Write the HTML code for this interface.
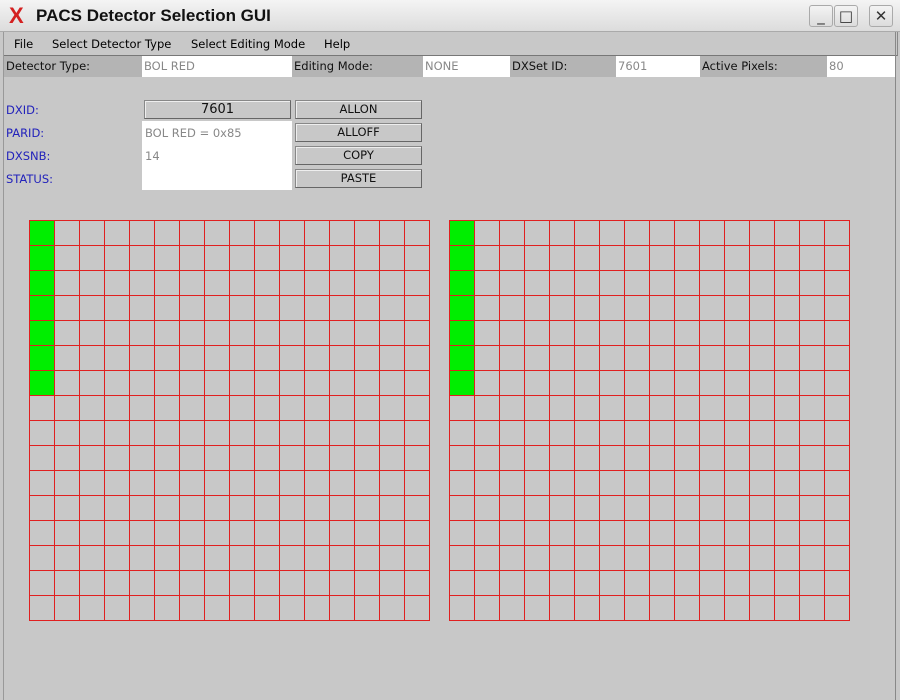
<!DOCTYPE html>
<html><head><style>
body{margin:0;width:900px;height:700px;background:#c8c8c8;font-family:"DejaVu Sans","Liberation Sans",sans-serif;font-size:11.5px;position:relative;overflow:hidden}
.a{position:absolute}
.title{left:0;top:0;width:900px;height:31px;background:linear-gradient(#f4f4f4,#dcdcdc);border-bottom:1px solid #aaa}
.lab{background:#b4b4b4;color:#111;height:21px;line-height:21px;padding-left:2px;box-sizing:border-box}
.val{background:#fff;color:#888;height:21px;line-height:21px;padding-left:2px;box-sizing:border-box}
.btn{background:#c8c8c8;border:1px solid #888;border-right-color:#666;border-bottom-color:#666;box-shadow:inset 1px 1px 0 #eee;text-align:center;box-sizing:border-box;height:19px;line-height:17px;color:#111}
.bl{color:#2222bb;left:6px}
.wb{width:24px;height:22px;border:1px solid #aaa;border-radius:3px;background:linear-gradient(#f4f4f4,#dcdcdc);box-sizing:border-box;text-align:center;line-height:20px;font-size:15px;color:#333}
</style></head><body>
<div class="a title"></div>
<div class="a" style="left:9px;top:3px;font-size:22px;color:#d42020;font-weight:bold;line-height:26px;font-family:'Liberation Sans',sans-serif">X</div>
<div class="a" style="left:36px;top:6px;font-size:17px;font-weight:bold;color:#111;font-family:'Liberation Sans',sans-serif">PACS Detector Selection GUI</div>
<div class="a wb" style="left:809px;top:5px">_</div>
<div class="a wb" style="left:834px;top:5px">□</div>
<div class="a wb" style="left:869px;top:5px">✕</div>
<div class="a" style="left:3px;top:32px;width:893px;height:23px;border-left:1px solid #888;border-right:1px solid #888;border-bottom:1px solid #777"></div>
<div class="a" style="left:895px;top:32px;width:1px;height:668px;background:#888"></div>
<div class="a" style="left:3px;top:32px;width:1px;height:668px;background:#999"></div>
<div class="a" style="left:14px;top:37px">File</div>
<div class="a" style="left:52px;top:37px">Select Detector Type</div>
<div class="a" style="left:191px;top:37px">Select Editing Mode</div>
<div class="a" style="left:324px;top:37px">Help</div>
<div class="a lab" style="left:4px;top:56px;width:138px">Detector Type:</div>
<div class="a val" style="left:142px;top:56px;width:150px">BOL RED</div>
<div class="a lab" style="left:292px;top:56px;width:131px">Editing Mode:</div>
<div class="a val" style="left:423px;top:56px;width:87px">NONE</div>
<div class="a lab" style="left:510px;top:56px;width:106px">DXSet ID:</div>
<div class="a val" style="left:616px;top:56px;width:84px">7601</div>
<div class="a lab" style="left:700px;top:56px;width:127px">Active Pixels:</div>
<div class="a val" style="left:827px;top:56px;width:68px">80</div>
<div class="a bl" style="top:103px">DXID:</div>
<div class="a bl" style="top:126px">PARID:</div>
<div class="a bl" style="top:149px">DXSNB:</div>
<div class="a bl" style="top:172px">STATUS:</div>
<div class="a" style="left:142px;top:121px;width:150px;height:69px;background:#fff"></div>
<div class="a" style="left:145px;top:126px;color:#888">BOL RED = 0x85</div>
<div class="a" style="left:145px;top:149px;color:#888">14</div>
<div class="a btn" style="left:144px;top:100px;width:147px;font-size:13px">7601</div>
<div class="a btn" style="left:295px;top:100px;width:127px">ALLON</div>
<div class="a btn" style="left:295px;top:123px;width:127px">ALLOFF</div>
<div class="a btn" style="left:295px;top:146px;width:127px">COPY</div>
<div class="a btn" style="left:295px;top:169px;width:127px">PASTE</div>
<svg class="a" style="left:0;top:0" width="900" height="700" shape-rendering="crispEdges">
<rect x="29" y="220" width="25" height="175" fill="#00ee00"/>
<rect x="449" y="220" width="25" height="175" fill="#00ee00"/>
<path stroke="#e02020" fill="none" d="
M29.5 220V621M54.5 220V621M79.5 220V621M104.5 220V621M129.5 220V621M154.5 220V621M179.5 220V621M204.5 220V621M229.5 220V621M254.5 220V621M279.5 220V621M304.5 220V621M329.5 220V621M354.5 220V621M379.5 220V621M404.5 220V621M429.5 220V621
M29 220.5H430M29 245.5H430M29 270.5H430M29 295.5H430M29 320.5H430M29 345.5H430M29 370.5H430M29 395.5H430M29 420.5H430M29 445.5H430M29 470.5H430M29 495.5H430M29 520.5H430M29 545.5H430M29 570.5H430M29 595.5H430M29 620.5H430
M449.5 220V621M474.5 220V621M499.5 220V621M524.5 220V621M549.5 220V621M574.5 220V621M599.5 220V621M624.5 220V621M649.5 220V621M674.5 220V621M699.5 220V621M724.5 220V621M749.5 220V621M774.5 220V621M799.5 220V621M824.5 220V621M849.5 220V621
M449 220.5H850M449 245.5H850M449 270.5H850M449 295.5H850M449 320.5H850M449 345.5H850M449 370.5H850M449 395.5H850M449 420.5H850M449 445.5H850M449 470.5H850M449 495.5H850M449 520.5H850M449 545.5H850M449 570.5H850M449 595.5H850M449 620.5H850"/>
</svg>
</body></html>
